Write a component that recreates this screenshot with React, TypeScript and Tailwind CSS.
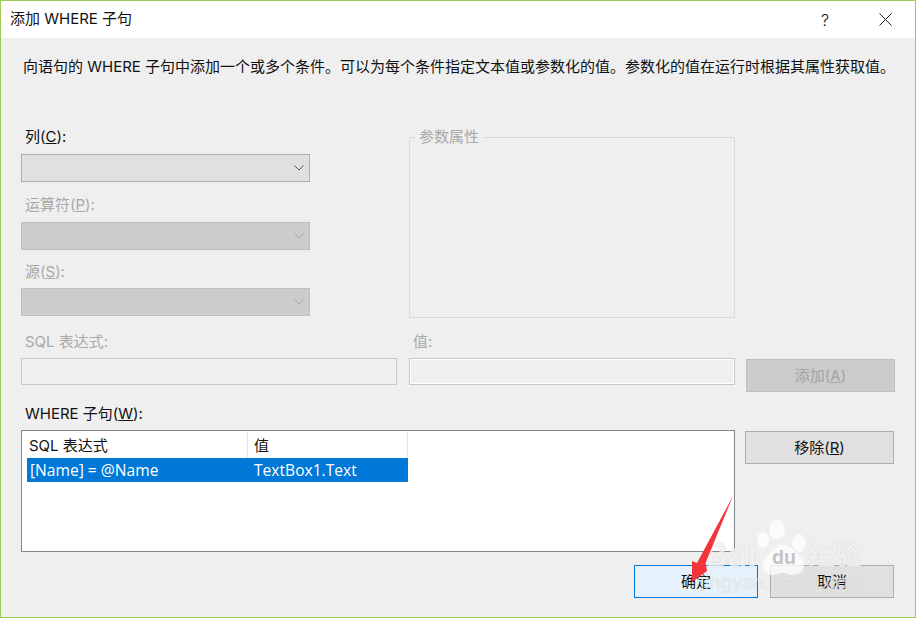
import React from 'react';

const cjk = "font-['Inter','Noto_Sans_CJK_SC',sans-serif]";

function Chevron({ disabled }: { disabled?: boolean }) {
  return (
    <svg width="10" height="6" viewBox="0 0 10 6" className="mr-[5px]" fill="none">
      <path d="M0.5 0.5 L5 5 L9.5 0.5" stroke={disabled ? '#a8a8a8' : '#555555'} strokeWidth="1" />
    </svg>
  );
}

function Combo({ disabled }: { disabled?: boolean }) {
  return (
    <div
      className={
        'h-[28px] w-[289px] border flex items-center justify-end ' +
        (disabled ? 'bg-[#cccccc] border-[#bfbfbf]' : 'bg-[#e0e0e0] border-[#adadad]')
      }
    >
      <Chevron disabled={disabled} />
    </div>
  );
}

function Label({ text, mnemonic, disabled }: { text: string; mnemonic?: string; disabled?: boolean }) {
  return (
    <div className={'h-[20px] pl-[4px] text-[15px] leading-[20px] whitespace-nowrap ' + (disabled ? 'text-[#a9a9a9]' : 'text-[#111111]')}>
      {text}
      {mnemonic ? (
        <>
          (<span className="underline">{mnemonic}</span>)
        </>
      ) : null}
      :
    </div>
  );
}

function Button({ children, className }: { children: React.ReactNode; className: string }) {
  return (
    <div className={'h-[33px] border pt-[1px] flex items-center justify-center text-[15px] ' + className}>
      {children}
    </div>
  );
}

export default function App() {
  return (
    <div className={'relative w-[916px] h-[618px] overflow-hidden border border-[#9ccb58] bg-[#efefef] flex flex-col ' + cjk}>
      {/* title bar */}
      <div className="h-[37px] shrink-0 bg-white flex items-center pl-[9px] text-[15px] text-[#111111]">
        <span>添加 WHERE 子句</span>
        <span className="ml-auto mr-[50px] text-[16px] font-light">?</span>
        <svg width="13" height="13" viewBox="0 0 13 13" className="mr-[23px]" fill="none">
          <path d="M0.5 0.5 L12.5 12.5 M12.5 0.5 L0.5 12.5" stroke="#222222" strokeWidth="1" />
        </svg>
      </div>

      <div className="flex-1 flex flex-col pl-[20px]">
        <div className="mt-[19px] h-[20px] pl-[2px] text-[15px] leading-[20px] text-[#111111] whitespace-nowrap">
          向语句的 WHERE 子句中添加一个或多个条件。可以为每个条件指定文本值或参数化的值。参数化的值在运行时根据其属性获取值。
        </div>

        {/* column / operator / source + parameter properties */}
        <div className="mt-[50px] flex">
          <div className="w-[289px] flex flex-col">
            <Label text="列" mnemonic="C" />
            <div className="mt-[7px]"><Combo /></div>
            <div className="mt-[13px]"><Label text="运算符" mnemonic="P" disabled /></div>
            <div className="mt-[7px]"><Combo disabled /></div>
            <div className="mt-[12px]"><Label text="源" mnemonic="S" disabled /></div>
            <div className="mt-[6px]"><Combo disabled /></div>
          </div>
          <fieldset className="ml-[99px] w-[326px] h-[191px] border border-[#d9d9d9] pl-[5px]">
            <legend className="px-[4px] text-[15px] leading-[20px] text-[#a9a9a9]">参数属性</legend>
          </fieldset>
        </div>

        {/* expression and value */}
        <div className="mt-[14px] flex">
          <div className="w-[376px]">
            <Label text="SQL 表达式" disabled />
            <div className="mt-[6px] h-[27px] border border-[#c8c8c8]" />
          </div>
          <div className="ml-[12px] w-[326px]">
            <Label text="值" disabled />
            <div className="mt-[6px] h-[27px] border border-[#c8c8c8] outline outline-white -outline-offset-2" />
          </div>
          <Button className="ml-[11px] mt-[27px] w-[149px] bg-[#cccccc] border-[#bfbfbf] text-[#a3a3a3]">
            添加(<span className="underline">A</span>)
          </Button>
        </div>

        <div className="mt-[12px]">
          <Label text="WHERE 子句" mnemonic="W" />
        </div>

        {/* where clause list */}
        <div className="mt-[6px] flex items-start">
          <div className="w-[714px] h-[122px] border border-[#828790] bg-white pl-[5px] pt-[1px]">
            <div className="w-[381px] h-[26px] flex text-[15px] text-[#111111]">
              <div className="w-[221px] pl-[2px] pt-[2px] border-r border-[#e5e5e5] flex items-center">SQL 表达式</div>
              <div className="flex-1 pl-[6px] pt-[2px] border-r border-[#e5e5e5] flex items-center">值</div>
            </div>
            <div className="w-[381px] h-[24px] flex items-center bg-[#0078d7] pt-[1px] font-['Open_Sans'] text-[15.6px] text-white">
              <div className="w-[227px] pl-[3px]">[Name] = @Name</div>
              <div>TextBox1.Text</div>
            </div>
          </div>
          <Button className="ml-[10px] mt-[1px] w-[149px] bg-[#e0e0e0] border-[#adadad] text-[#111111]">
            移除(<span className="underline">R</span>)
          </Button>
        </div>

        {/* dialog buttons */}
        <div className="mt-[13px] flex justify-end pr-[21px] gap-[12px]">
          <Button className="w-[124px] bg-[#e5f1fb] border-[#0078d7] text-[#111111]">确定</Button>
          <Button className="w-[124px] bg-[#e0e0e0] border-[#adadad] text-[#111111]">取消</Button>
        </div>
      </div>

      {/* baidu watermark */}
      <div className="absolute left-[699px] top-[519px] w-[170px] h-[76px] pointer-events-none text-white/75 [text-shadow:0_0_1px_rgba(0,0,0,0.2)]">
        <svg width="50" height="56" viewBox="0 0 50 56" className="absolute left-[58px] top-0" fill="#ffffff" fillOpacity="0.75">
          <ellipse cx="5" cy="20" rx="6" ry="8" />
          <ellipse cx="19" cy="10" rx="8" ry="10" />
          <ellipse cx="41" cy="23" rx="7" ry="9" />
          <path d="M25 25 C33 25 36 32 42 37 C50 44 45 55 36 55 C31 55 29 53 25 53 C21 53 19 55 14 55 C5 55 1 44 8 37 C14 32 17 25 25 25Z" />
        </svg>
        <span className="absolute left-[5px] top-[15px] text-[34px] leading-[40px] font-bold">Bai</span>
        <span className="absolute left-[72px] top-[28px] text-[19px] leading-[20px] font-bold text-[#c4c4c4] [text-shadow:none]">du</span>
        <span className="absolute left-[108px] top-[22px] text-[27px] leading-[28px] font-bold">经验</span>
        <span className="absolute left-0 top-[52px] text-[19px] leading-[22px] whitespace-nowrap text-white/65">jingyan.baidu.com</span>
      </div>

      {/* red arrow */}
      <svg width="50" height="100" viewBox="0 0 50 100" className="absolute left-[687px] top-[494px] pointer-events-none">
        <path d="M45 1 L17.5 68 L19 76 L4 87 L4 66 L9 68 Z" fill="#f2353a" />
      </svg>
    </div>
  );
}
